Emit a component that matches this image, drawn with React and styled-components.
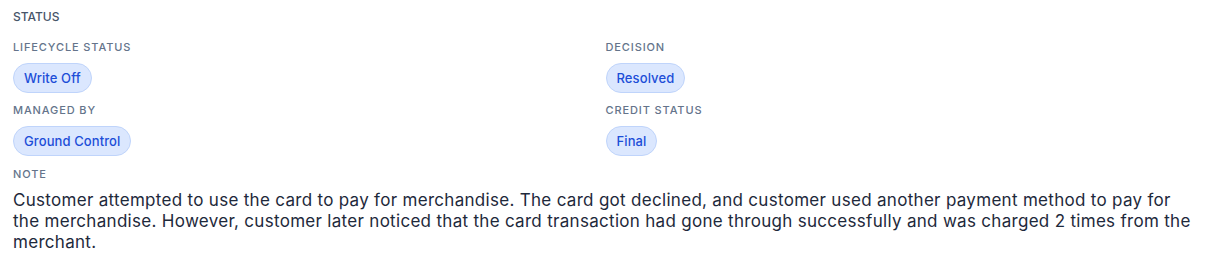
import React from "react";
import styled, { createGlobalStyle } from "styled-components";

const GlobalStyle = createGlobalStyle`
	body {
		margin: 0;
		background: #fff;
		font-family: Inter, "Noto Sans", sans-serif;
	}
`;

const fields = [
	{ label: "LIFECYCLE STATUS", value: "Write Off" },
	{ label: "DECISION", value: "Resolved" },
	{ label: "MANAGED BY", value: "Ground Control" },
	{ label: "CREDIT STATUS", value: "Final" },
];

const App = () => {
	return (
		<>
			<GlobalStyle />
			<Section>
				<SectionTitle>STATUS</SectionTitle>
				<FieldGrid>
					{fields.map((f) => (
						<Field key={f.label}>
							<Label>{f.label}</Label>
							<Badge>{f.value}</Badge>
						</Field>
					))}
				</FieldGrid>
				<Label>NOTE</Label>
				<Note>
					Customer attempted to use the card to pay for merchandise. The card
					got declined, and customer used another payment method to pay for
					the merchandise. However, customer later noticed that the card
					transaction had gone through successfully and was charged 2 times
					from the merchant.
				</Note>
			</Section>
		</>
	);
};

export default App;

const Section = styled.div`
	padding: 9px 13px 0;
	display: flex;
	flex-direction: column;
`;
const SectionTitle = styled.div`
	font-size: 12px;
	font-weight: 500;
	color: #475569;
	line-height: 16px;
	margin-bottom: 15px;
`;
const FieldGrid = styled.div`
	display: grid;
	grid-template-columns: 1fr 1fr;
	column-gap: 4px;
	row-gap: 10px;
	margin-bottom: 11px;
`;
const Field = styled.div`
	display: flex;
	flex-direction: column;
	align-items: flex-start;
	gap: 9px;
`;
const Label = styled.div`
	font-size: 11px;
	font-weight: 500;
	letter-spacing: 0.08em;
	color: #64748b;
	line-height: 14px;
`;
const Badge = styled.span`
	display: inline-flex;
	align-items: center;
	height: 30px;
	box-sizing: border-box;
	padding: 0 10px;
	border-radius: 999px;
	border: 1px solid #bfd4fb;
	background: #dbe7fe;
	color: #1d4ed8;
	font-size: 13px;
	font-weight: 500;
	letter-spacing: 0.1px;
`;
const Note = styled.p`
	margin: 9px 0 0;
	font-size: 17px;
	line-height: 21px;
	letter-spacing: 0.3px;
	color: #1e293b;
`;
